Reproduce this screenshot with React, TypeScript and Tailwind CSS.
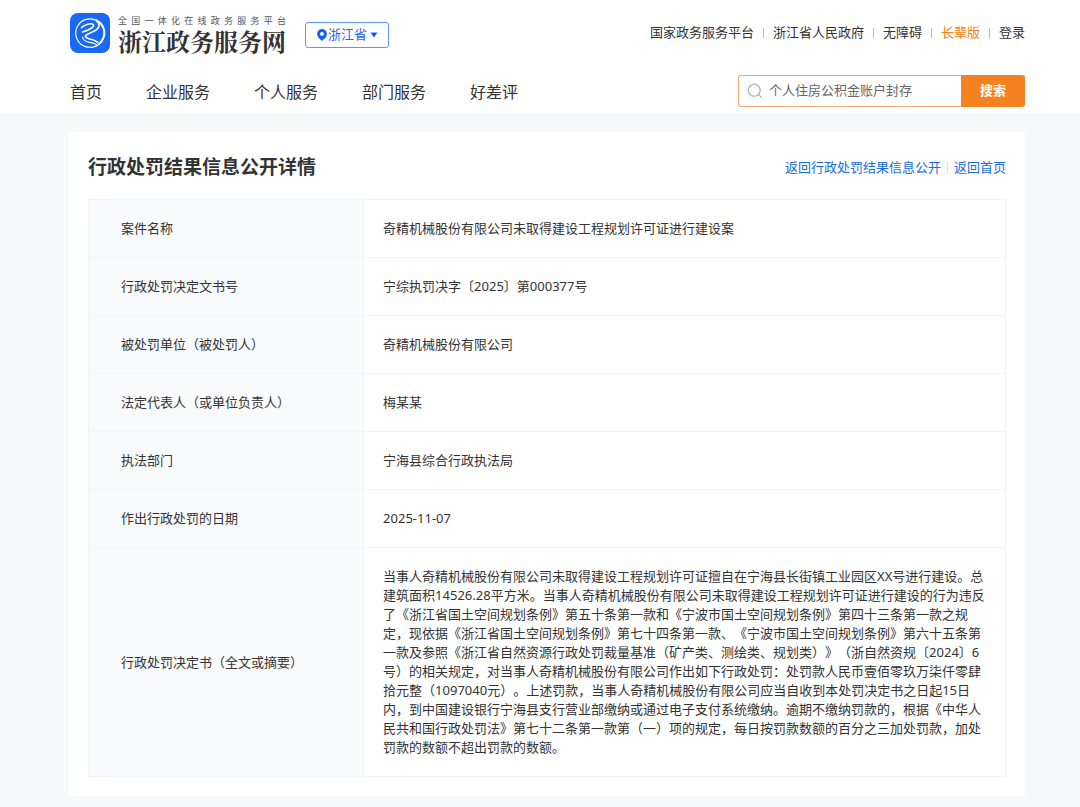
import { Fragment } from "react";

const topLinks = [
  { label: "国家政务服务平台", className: "text-[#333]" },
  { label: "浙江省人民政府", className: "text-[#333]" },
  { label: "无障碍", className: "text-[#333]" },
  { label: "长辈版", className: "text-[#f58220]" },
  { label: "登录", className: "text-[#333]" },
];

const navItems = ["首页", "企业服务", "个人服务", "部门服务", "好差评"];

const rows = [
  { label: "案件名称", value: "奇精机械股份有限公司未取得建设工程规划许可证进行建设案" },
  { label: "行政处罚决定文书号", value: "宁综执罚决字〔2025〕第000377号" },
  { label: "被处罚单位（被处罚人）", value: "奇精机械股份有限公司" },
  { label: "法定代表人（或单位负责人）", value: "梅某某" },
  { label: "执法部门", value: "宁海县综合行政执法局" },
  { label: "作出行政处罚的日期", value: "2025-11-07" },
  {
    label: "行政处罚决定书（全文或摘要）",
    value:
      "当事人奇精机械股份有限公司未取得建设工程规划许可证擅自在宁海县长街镇工业园区XX号进行建设。总建筑面积14526.28平方米。当事人奇精机械股份有限公司未取得建设工程规划许可证进行建设的行为违反了《浙江省国土空间规划条例》第五十条第一款和《宁波市国土空间规划条例》第四十三条第一款之规定，现依据《浙江省国土空间规划条例》第七十四条第一款、《宁波市国土空间规划条例》第六十五条第一款及参照《浙江省自然资源行政处罚裁量基准（矿产类、测绘类、规划类）》（浙自然资规〔2024〕6号）的相关规定，对当事人奇精机械股份有限公司作出如下行政处罚：处罚款人民币壹佰零玖万柒仟零肆拾元整（1097040元）。上述罚款，当事人奇精机械股份有限公司应当自收到本处罚决定书之日起15日内，到中国建设银行宁海县支行营业部缴纳或通过电子支付系统缴纳。逾期不缴纳罚款的，根据《中华人民共和国行政处罚法》第七十二条第一款第（一）项的规定，每日按罚款数额的百分之三加处罚款，加处罚款的数额不超出罚款的数额。",
  },
];

function LogoMark() {
  return (
    <svg viewBox="0 0 40 40" className="size-10 shrink-0" aria-hidden="true">
      <rect width="40" height="40" rx="8" fill="#1a69f5" />
      <g fill="none" stroke="#fff" strokeLinecap="round" strokeLinejoin="round">
        <path d="M31.8 28.3A14.3 14.3 0 1 1 26.6 7.4" strokeWidth="1.2" />
        <path d="M26.6 7.4C36 12.5 36.5 23.5 30 30" strokeWidth="2" />
        <path d="M11.5 14.6C15 11.2 20.6 9.9 23 11.4C25.4 13.2 20.4 16.6 12.6 19" strokeWidth="1.6" />
        <path d="M26.5 7.8C30.2 10.8 30 14.2 26 17C22.5 19.4 17.4 20.6 15.6 22.6C14.6 24 17 25.4 20.6 26.2C23.6 26.8 26.6 27.8 28 30" strokeWidth="1.6" />
        <path d="M12.5 24C13 27.6 17.5 29.2 21 29.6C23.6 30 25.4 30.6 26.6 31.8" strokeWidth="1.2" />
      </g>
    </svg>
  );
}

function PinIcon() {
  return (
    <svg viewBox="0 0 12 14" className="h-3.5 w-3" aria-hidden="true">
      <path fillRule="evenodd" d="M6 1a4.9 4.9 0 0 1 4.9 4.9C10.9 8.9 8 11 6 13C4 11 1.1 8.9 1.1 5.9A4.9 4.9 0 0 1 6 1ZM6 4a1.9 1.9 0 1 0 0 3.8A1.9 1.9 0 0 0 6 4Z" fill="#0f62f0" />
    </svg>
  );
}

function Header() {
  return (
    <header className="bg-white pr-[55px] pl-[70px]">
      <div className="flex h-[66px] items-center justify-between">
        <div className="flex items-center">
          <a href="#" className="flex items-center gap-2">
            <LogoMark />
            <span className="flex w-[169px] flex-col pt-1">
              <span className="w-[168px] text-[9px] leading-[12px] text-[#555] [text-align-last:justify]">全国一体化在线政务服务平台</span>
              <span className="font-['Noto_Serif_CJK_SC','Noto_Sans_CJK_SC',serif] text-[24px] leading-[28px] font-bold whitespace-nowrap text-[#333]">
                浙江政务服务网
              </span>
            </span>
          </a>
          <button type="button" className="mt-1 ml-[18px] flex h-[26px] w-[84px] items-center justify-center rounded-[3px] border border-[#5c97f8] text-[13px] text-[#1a69f5]">
            <PinIcon />
            <span>浙江省</span>
            <svg viewBox="0 0 8 6" className="ml-[3px] h-1.5 w-2" aria-hidden="true">
              <path d="M0.5 0.5H7.5L4 5.5Z" fill="#0f62f0" />
            </svg>
          </button>
        </div>
        <div className="flex items-center text-[13px]">
          {topLinks.map((link, i) => (
            <Fragment key={link.label}>
              {i > 0 && <span className="mx-[9px] h-2.5 w-px bg-[#bbb]" />}
              <a href="#" className={link.className}>{link.label}</a>
            </Fragment>
          ))}
        </div>
      </div>
      <div className="flex items-start justify-between pt-[9px] pb-1.5">
        <nav className="flex gap-11 text-[16px] leading-[34px] text-[#333]">
          {navItems.map((item) => (
            <a key={item} href="#" className="h-8">{item}</a>
          ))}
        </nav>
        <form className="flex h-8 w-[287px]">
          <label className="flex min-w-0 flex-1 items-center gap-1.5 rounded-l-[3px] border border-r-0 border-[#f3a873] pl-2">
            <svg viewBox="0 0 16 16" className="size-4 shrink-0" fill="none" stroke="#b3b3b3" strokeWidth="1.3" strokeLinecap="round" aria-hidden="true">
              <circle cx="7.2" cy="7.2" r="6" />
              <path d="M11.6 11.6L14.6 14.6" />
            </svg>
            <input type="text" aria-label="搜索" placeholder="个人住房公积金账户封存" className="min-w-0 flex-1 text-[13px] outline-none placeholder:text-[#666]" />
          </label>
          <button type="button" className="w-16 rounded-r-[3px] bg-[#f58220] text-[13px] font-bold text-white">搜索</button>
        </form>
      </div>
    </header>
  );
}

export default function App() {
  return (
    <div className="min-h-screen bg-[#f7f8fa] font-['Noto_Sans','Noto_Sans_CJK_SC',sans-serif] text-[#333] [text-spacing-trim:space-all]">
      <Header />
      <main className="pt-[19px] pr-[55px] pb-[11px] pl-[69px]">
        <div className="bg-white px-[19px] pb-[19px]">
          <div className="flex h-[67px] items-center justify-between pt-1">
            <h1 className="text-[19px] font-bold">行政处罚结果信息公开详情</h1>
            <div className="flex items-center text-[13px] text-[#1a6be0]">
              <a href="#">返回行政处罚结果信息公开</a>
              <span className="mx-1.5 h-3 w-px bg-[#e2e2e2]" />
              <a href="#">返回首页</a>
            </div>
          </div>
          <table className="w-full table-fixed border-collapse text-left text-[13px] leading-[19px]">
            <tbody>
              {rows.map((row) => (
                <tr key={row.label}>
                  <th scope="row" className="w-[30%] border border-[#f2f4f7] bg-[#f9fafc] py-[19px] pl-8 font-normal">{row.label}</th>
                  <td className="border border-[#f2f4f7] py-[19px] pr-5 pl-[19px]">{row.value}</td>
                </tr>
              ))}
            </tbody>
          </table>
        </div>
      </main>
    </div>
  );
}
